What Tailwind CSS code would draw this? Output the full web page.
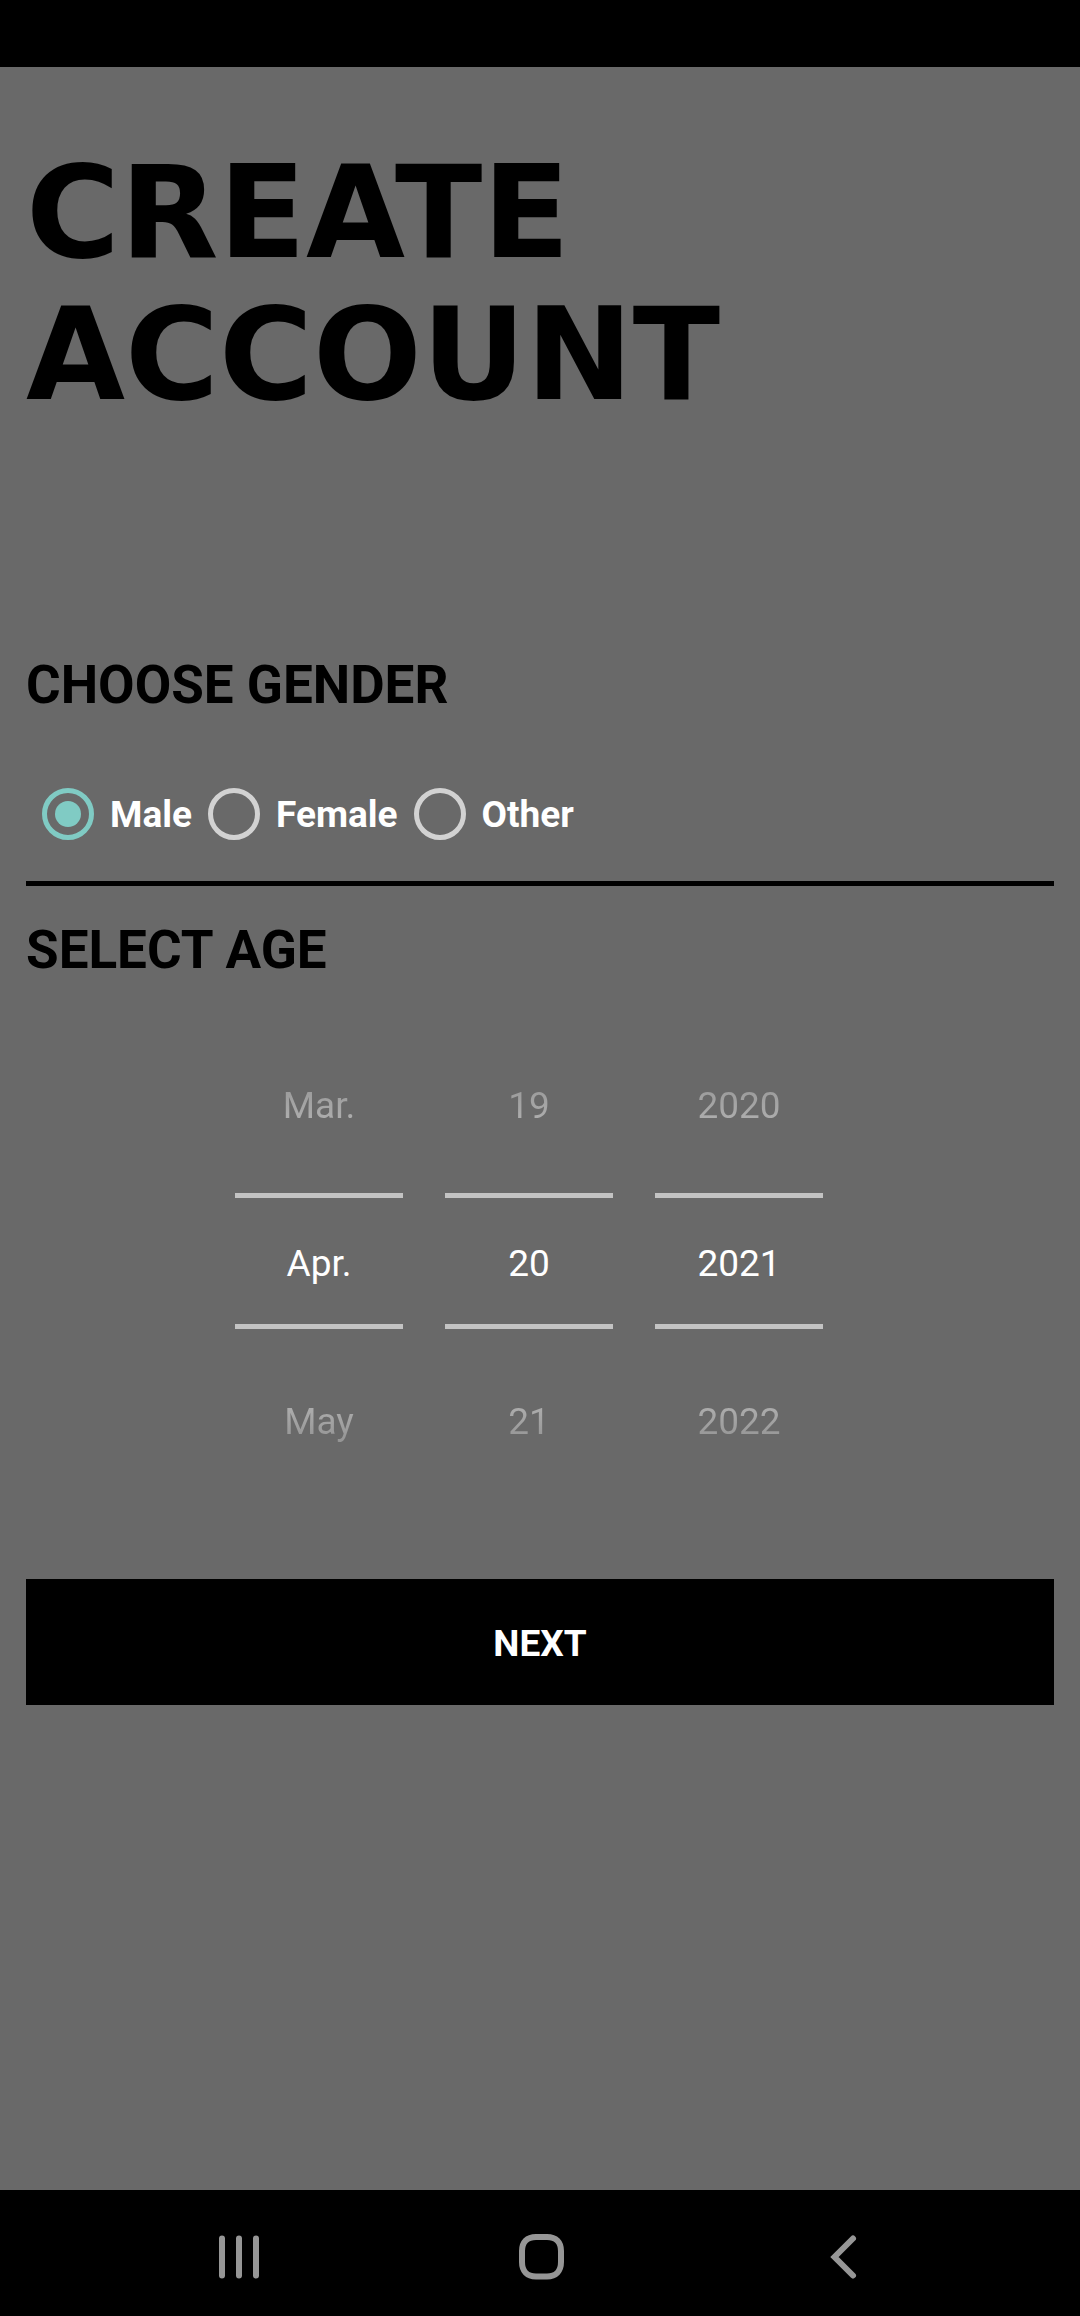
<!DOCTYPE html>
<html lang="en">
<head>
<meta charset="utf-8">
<meta name="viewport" content="width=device-width, initial-scale=1">
<title>Create account</title>
<script src="https://cdn.jsdelivr.net/npm/@tailwindcss/browser@4"></script>
</head>
<body class="flex min-h-screen flex-col bg-[#696969] font-['Roboto',sans-serif] text-[37px] leading-[43px] text-black">
  <div class="h-[67px] shrink-0 bg-black"></div>

  <main class="flex-1 px-[26px] pt-[75px]">
    <h1 class="font-['DejaVu_Sans',sans-serif] text-[128px] leading-[142px] font-bold">CREATE<br>ACCOUNT</h1>

    <form class="mt-[228px] flex flex-col">
      <h2 id="gender" class="text-[53px] leading-[62px] font-bold">CHOOSE GENDER</h2>
      <div role="radiogroup" aria-labelledby="gender" class="mt-[56px] flex h-[84px] items-center font-bold text-white">
        <label class="flex items-center"><input type="radio" name="gender" checked class="mx-[16px] size-[52px] appearance-none rounded-full border-[5px] border-[#d2d2d2] bg-clip-content p-[8px] checked:border-[#80cbc4] checked:bg-[#80cbc4]">Male</label>
        <label class="flex items-center"><input type="radio" name="gender" class="mx-[16px] size-[52px] appearance-none rounded-full border-[5px] border-[#d2d2d2] bg-clip-content p-[8px] checked:border-[#80cbc4] checked:bg-[#80cbc4]">Female</label>
        <label class="flex items-center"><input type="radio" name="gender" class="mx-[16px] size-[52px] appearance-none rounded-full border-[5px] border-[#d2d2d2] bg-clip-content p-[8px] checked:border-[#80cbc4] checked:bg-[#80cbc4]">Other</label>
      </div>
      <hr class="mt-[25px] border-t-[5px] border-black">

      <h2 class="mt-[33px] text-[53px] leading-[62px] font-bold">SELECT AGE</h2>
      <div class="mt-[103px] mr-[22px] grid w-[588px] grid-cols-3 gap-[42px] self-center">
        <div class="flex flex-col">
          <button type="button" class="bg-linear-to-b from-[#989898] to-[#b2b2b2] bg-clip-text text-transparent">Mar.</button>
          <input aria-label="Month" value="Apr." class="mt-[66px] mb-[71px] h-[136px] w-full border-y-[5px] border-[#c3c3c3] pt-1 text-center text-white">
          <button type="button" class="bg-linear-to-b from-[#b2b2b2] to-[#939393] bg-clip-text text-transparent">May</button>
        </div>
        <div class="flex flex-col">
          <button type="button" class="bg-linear-to-b from-[#989898] to-[#b2b2b2] bg-clip-text text-transparent">19</button>
          <input aria-label="Day" value="20" class="mt-[66px] mb-[71px] h-[136px] w-full border-y-[5px] border-[#c3c3c3] pt-1 text-center text-white">
          <button type="button" class="bg-linear-to-b from-[#b2b2b2] to-[#939393] bg-clip-text text-transparent">21</button>
        </div>
        <div class="flex flex-col">
          <button type="button" class="bg-linear-to-b from-[#989898] to-[#b2b2b2] bg-clip-text text-transparent">2020</button>
          <input aria-label="Year" value="2021" class="mt-[66px] mb-[71px] h-[136px] w-full border-y-[5px] border-[#c3c3c3] pt-1 text-center text-white">
          <button type="button" class="bg-linear-to-b from-[#b2b2b2] to-[#939393] bg-clip-text text-transparent">2022</button>
        </div>
      </div>

      <button type="submit" class="mt-[136px] h-[126px] bg-black pt-[2px] font-bold text-white">NEXT</button>
    </form>
  </main>

  <nav class="flex h-[126px] shrink-0 justify-center bg-black pt-[8px] pl-[3px] text-[#969696]">
    <div class="grid w-[906px] grid-cols-3 place-items-center">
      <button type="button" aria-label="Recent apps">
        <svg class="size-[48px]" viewBox="0 0 48 48" fill="none" stroke="currentColor" stroke-width="6" stroke-linecap="round"><path d="M6 5.500V42.500M23 5.500V42.500M40 5.500V42.500"/></svg>
      </button>
      <button type="button" aria-label="Home">
        <svg class="size-[48px]" viewBox="0 0 48 48" fill="none" stroke="currentColor" stroke-width="6"><path d="M18 4H29C38 4 43 9 43 18V29C43 38 38 43.500 29 43.500H18C9 43.500 4 38 4 29V18C4 9 9 4 18 4Z"/></svg>
      </button>
      <button type="button" aria-label="Back">
        <svg class="size-[48px]" viewBox="0 0 48 48" fill="none" stroke="currentColor" stroke-width="6" stroke-linecap="round"><path d="M33 5.500 14.500 24 33 42.500"/></svg>
      </button>
    </div>
  </nav>
</body>
</html>
